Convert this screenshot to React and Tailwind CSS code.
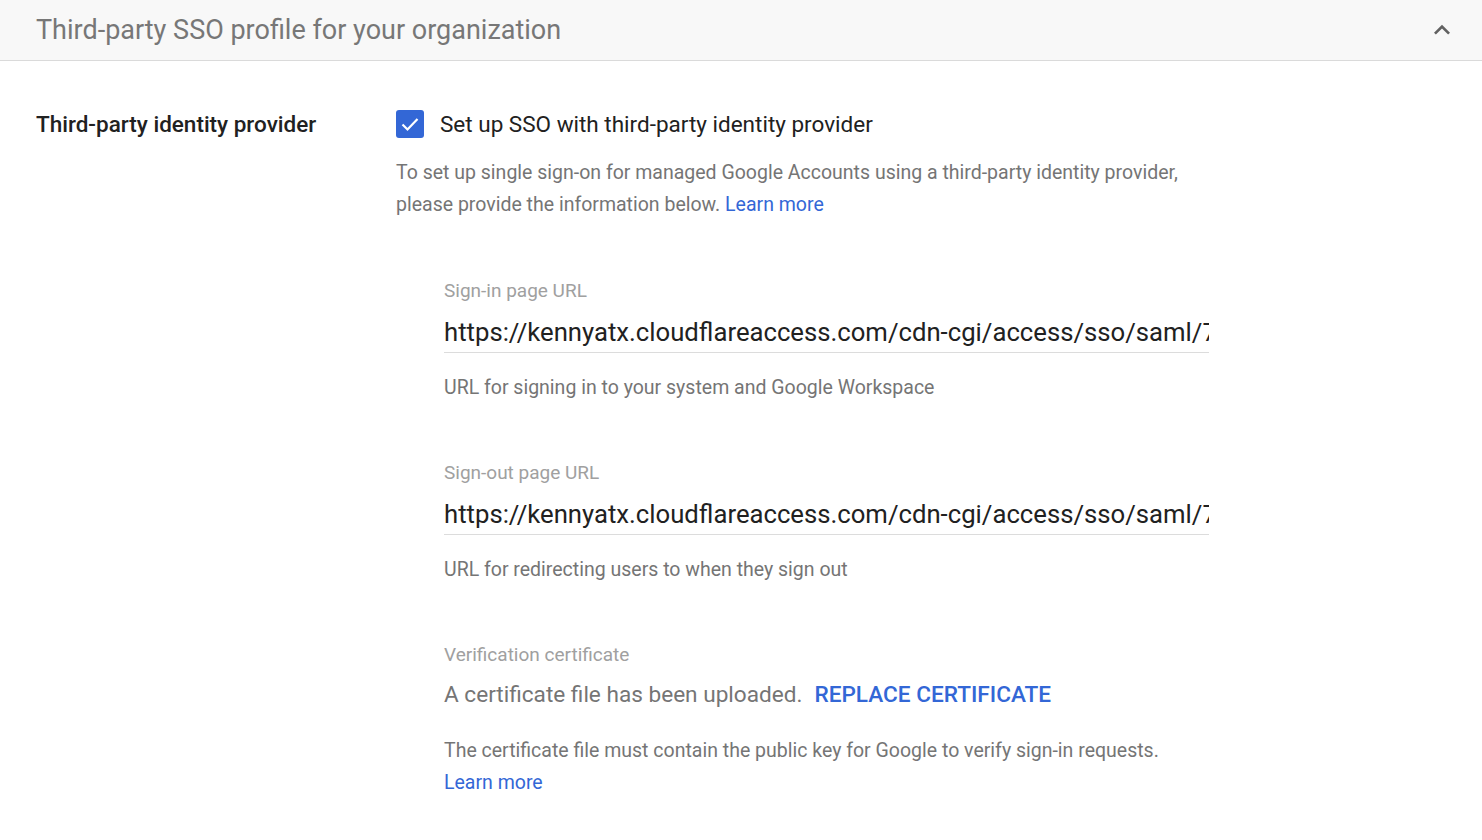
import { useState } from 'react'

const URL = 'https://kennyatx.cloudflareaccess.com/cdn-cgi/access/sso/saml/7c1e5b2a9f3d4e6b8a0c2d4f6e8a0b2c'

function UrlField({ label, value, helper }) {
  return (
    <div className="flex flex-col">
      <div className="text-[19px] leading-[24px] text-[#a0a0a0]">{label}</div>
      <div className="mt-[14px] w-[765px] overflow-hidden whitespace-nowrap border-b border-[#dcdcdc] pb-[5px] text-[25.7px] leading-[30px] text-[#212121]">
        {value}
      </div>
      <div className="mt-[23px] text-[19.5px] leading-[24px] text-[#757575]">{helper}</div>
    </div>
  )
}

export default function App() {
  const [checked, setChecked] = useState(true)

  return (
    <div className="min-h-screen bg-white font-['Roboto',sans-serif]">
      <header className="flex h-[61px] items-center justify-between border-b border-[#dadada] bg-[#f8f8f8] pl-[36px] pr-[24px]">
        <h1 className="text-[27px] font-normal text-[#777777]">Third-party SSO profile for your organization</h1>
        <svg width="32" height="32" viewBox="0 0 24 24" className="text-[#616161]">
          <path d="M7.41 15.41 12 10.83l4.59 4.58L18 14l-6-6-6 6z" fill="currentColor" />
        </svg>
      </header>

      <div className="flex pl-[36px] pt-[49px]">
        <div className="w-[360px] shrink-0 text-[22.5px] font-medium leading-[28px] text-[#212121]">
          Third-party identity provider
        </div>

        <div className="flex flex-col">
          <label className="flex cursor-pointer items-center gap-[16px]">
            <button
              onClick={() => setChecked(!checked)}
              className={`flex h-[28px] w-[28px] items-center justify-center rounded-[3px] ${checked ? 'bg-[#3367d6]' : 'border-2 border-[#757575] bg-white'}`}
            >
              {checked && (
                <svg width="24" height="24" viewBox="0 0 24 24">
                  <path d="M4.5 12.5l5 5L19.5 7" fill="none" stroke="white" strokeWidth="2.2" />
                </svg>
              )}
            </button>
            <span className="text-[22.5px] leading-[28px] text-[#212121]">Set up SSO with third-party identity provider</span>
          </label>

          <p className="mt-[19px] w-[795px] text-[19.5px] leading-[32px] text-[#757575]">
            To set up single sign-on for managed Google Accounts using a third-party identity provider, please provide the information below.{' '}
            <a className="text-[#3367d6]" href="#">Learn more</a>
          </p>

          <div className="ml-[48px] mt-[58px] flex flex-col gap-[61px]">
            <UrlField label="Sign-in page URL" value={URL} helper="URL for signing in to your system and Google Workspace" />
            <UrlField label="Sign-out page URL" value={URL} helper="URL for redirecting users to when they sign out" />

            <div className="flex flex-col">
              <div className="text-[19px] leading-[24px] text-[#a0a0a0]">Verification certificate</div>
              <div className="mt-[14px] flex items-center gap-[12px] text-[22.6px] leading-[28px]">
                <span className="text-[#757575]">A certificate file has been uploaded.</span>
                <button className="font-medium text-[#3367d6]">REPLACE CERTIFICATE</button>
              </div>
              <p className="mt-[26px] text-[19.5px] leading-[32px] text-[#757575]">
                The certificate file must contain the public key for Google to verify sign-in requests.
                <br />
                <a className="text-[#3367d6]" href="#">Learn more</a>
              </p>
            </div>
          </div>
        </div>
      </div>
    </div>
  )
}
